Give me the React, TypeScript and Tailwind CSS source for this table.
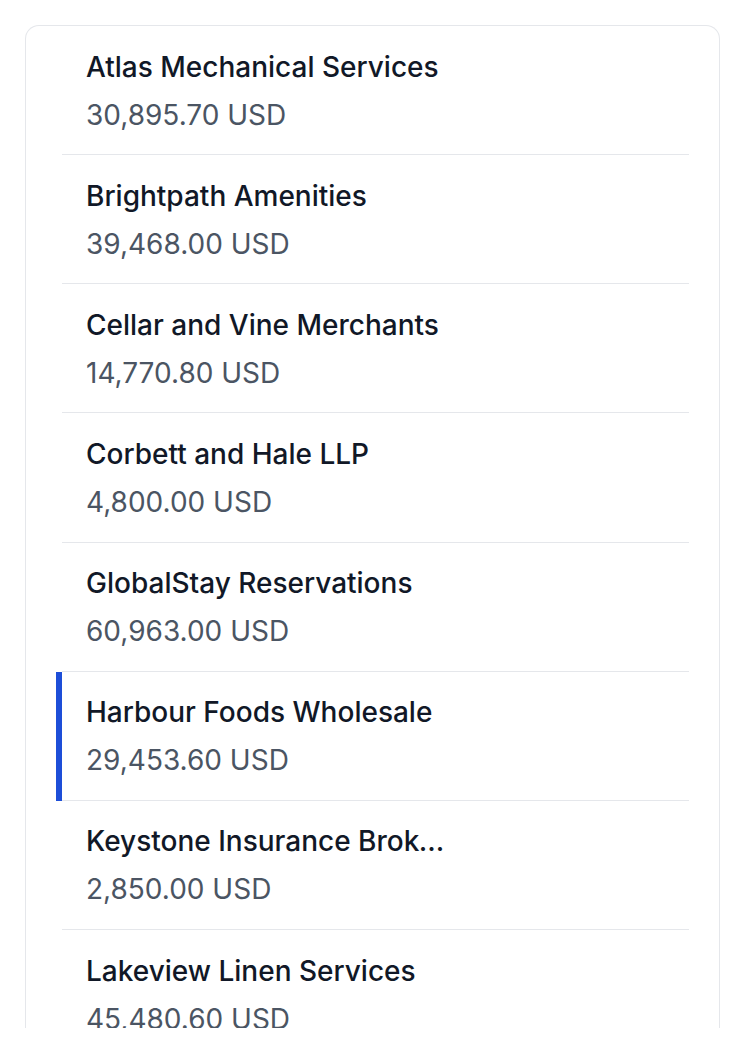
const rows = [
  { name: "Atlas Mechanical Services", amount: "30,895.70 USD" },
  { name: "Brightpath Amenities", amount: "39,468.00 USD" },
  { name: "Cellar and Vine Merchants", amount: "14,770.80 USD" },
  { name: "Corbett and Hale LLP", amount: "4,800.00 USD" },
  { name: "GlobalStay Reservations", amount: "60,963.00 USD" },
  { name: "Harbour Foods Wholesale", amount: "29,453.60 USD", selected: true },
  { name: "Keystone Insurance Brokers Ltd", amount: "2,850.00 USD" },
  { name: "Lakeview Linen Services", amount: "45,480.60 USD" },
];

export default function App() {
  return (
    <div className="h-[1052px] bg-white pl-[25px] pr-6 pt-[25px] font-['Inter','Liberation_Sans',sans-serif]">
      <div className="h-[1003px] overflow-hidden rounded-t-[14px] border-x border-t border-[#e5e7eb] bg-white pl-[30px] pr-[30px]">
        <ul>
          {rows.map((r) => (
            <li key={r.name} className="flex">
              <div className={r.selected ? "w-[6px] shrink-0 bg-[#1d4ed8]" : "w-[6px] shrink-0"} />
              <div className="flex-1 border-b border-[#e5e7eb] px-6 pt-[20.5px] pb-[19.67px]">
                <div className="max-w-[372px] truncate text-[28px] leading-[40px] font-medium text-[#111827]">
                  {r.name}
                </div>
                <div className="mt-2 text-[28px] leading-[40px] text-[#4b5563]">{r.amount}</div>
              </div>
            </li>
          ))}
        </ul>
      </div>
    </div>
  );
}
